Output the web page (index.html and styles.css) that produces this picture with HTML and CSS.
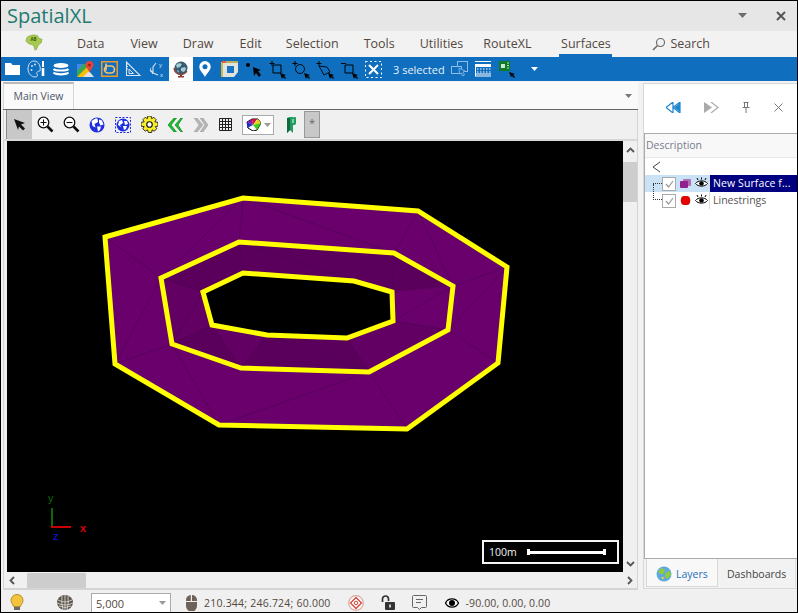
FILE: index.html
```html
<!DOCTYPE html>
<html lang="en">
<head>
<meta charset="utf-8">
<title>SpatialXL</title>
<link rel="stylesheet" href="styles.css">
</head>
<body>
<div class="app">
  <header class="titlebar">
    <div class="app-title">SpatialXL</div>
    <div class="window-controls">
      <svg width="10" height="6" viewBox="0 0 10 6"><path d="M0 0h9L4.500 5z" fill="#6e6e6e"/></svg>
      <svg width="10" height="10" viewBox="0 0 10 10"><path d="M1 1l8 8M9 1l-8 8" stroke="#555" stroke-width="2" fill="none"/></svg>
    </div>
  </header>

  <nav class="menubar">
    <svg class="logo" width="18" height="17" viewBox="0 0 20 17"><path d="M5 1l5-1 4 1 2 3 3 1-1 4-3 2-2 5-2 1-1-4-2-2-4-1-3-3 1-4z" fill="#a6c94f" stroke="#7f9c3a" stroke-width=".6"/><text x="6" y="7" class="logo-text">AB</text></svg>
    <a class="m m-data">Data</a>
    <a class="m m-view">View</a>
    <a class="m m-draw">Draw</a>
    <a class="m m-edit">Edit</a>
    <a class="m m-sel">Selection</a>
    <a class="m m-tools">Tools</a>
    <a class="m m-util">Utilities</a>
    <a class="m m-route">RouteXL</a>
    <a class="m m-surf active">Surfaces</a>
    <svg class="search-ico" width="14" height="14" viewBox="0 0 14 14"><circle cx="8.500" cy="5.500" r="4" fill="none" stroke="#666" stroke-width="1.100"/><path d="M5.500 8.500L1 13" stroke="#666" stroke-width="1.400"/></svg>
    <a class="m m-search">Search</a>
  </nav>

  <div class="quickbar">
    <span class="qb"><svg width="16" height="14" viewBox="0 0 16 14"><path d="M0 1h6l1.500 2H15v10H0z" fill="#fff"/></svg></span>
    <span class="qb"><svg width="20" height="18" viewBox="0 0 20 18"><path d="M7 1C3 1 1 5 1 9c0 5 4 8 7 8 2 0 3-1 2-3-1-2 1-3 3-3 1-4-1-10-6-10z" fill="none" stroke="#cfe1f2" stroke-width="1"/><circle cx="5" cy="6" r="1" fill="#cfe1f2"/><circle cx="8" cy="4.500" r="1" fill="#cfe1f2"/><circle cx="4.500" cy="10" r="1" fill="#cfe1f2"/><path d="M16 1v6" stroke="#fff" stroke-width="2"/><path d="M16 8v8" stroke="#fff" stroke-width="2.600"/></svg></span>
    <span class="qb"><svg width="16" height="14" viewBox="0 0 16 14"><ellipse cx="8" cy="3.500" rx="7.500" ry="2.500" fill="#fff"/><path d="M.5 7c2 2 13 2 15 0M.5 10.500c2 2.500 13 2.500 15 0" stroke="#fff" stroke-width="2.200" fill="none"/></svg></span>
    <span class="qb"><svg width="17" height="16" viewBox="0 0 17 16"><path d="M0 3h12v13H0z" fill="#34a853"/><path d="M0 16L12 4v12z" fill="#fbbc04"/><path d="M0 3h6L0 10z" fill="#4285f4"/><path d="M6 16l6-6 5 6z" fill="#dfe3e6"/><path d="M12.500 0a4 4 0 0 1 4 4c0 2.500-3 4-4 8-1-4-4-5.500-4-8a4 4 0 0 1 4-4z" fill="#e2463a"/><circle cx="12.500" cy="4" r="1.300" fill="#8c1d18"/></svg></span>
    <span class="qb"><svg width="17" height="16" viewBox="0 0 17 16"><rect x=".75" y=".75" width="15.500" height="14.500" fill="none" stroke="#f09a27" stroke-width="1.500"/><rect x="3.500" y="5" width="10" height="7" rx="3.500" fill="none" stroke="#f3c173" stroke-width="1.700"/><path d="M5 2.500v7" stroke="#f3c173" stroke-width="1.700"/></svg></span>
    <span class="qb"><svg width="16" height="16" viewBox="0 0 16 16"><path d="M1.500 1v13.500H15z" fill="none" stroke="#d9e7f5" stroke-width="1.100"/><path d="M4 8v4.500h4.500z" fill="none" stroke="#d9e7f5"/><path d="M3 3h-1M3 5.500h-1M3 8h-1" stroke="#d9e7f5"/></svg></span>
    <span class="qb"><svg width="18" height="17" viewBox="0 0 18 17"><path d="M5 12L5 6l3-4M5 12l5 2M5 12L2 9" stroke="#d9e7f5" stroke-width="1.100" fill="none"/><path d="M5 13a6 6 0 0 1-2-7" stroke="#d9e7f5" fill="none" stroke-dasharray="1.500 1"/><text x="11" y="6" class="axis-mini">y</text><text x="12" y="16" class="axis-mini">x</text></svg></span>
    <span class="qb qb-on"><svg width="16" height="17" viewBox="0 0 16 17"><circle cx="8" cy="7" r="6.500" fill="#3a5a70"/><path d="M3 4l3-2 3 1-2 3-3 1zM8 7l4-1 1 2-2 3-3-1zM4 9l2 1-1 2z" fill="#9fd0d8"/><path d="M1 7a7 7 0 0 0 13 3" stroke="#8a3b32" fill="none" stroke-width="1.300"/><path d="M5 15h6v1.500H5z" fill="#8a3b32"/><path d="M7 13h2v2H7z" fill="#8a3b32"/></svg></span>
    <span class="qb"><svg width="12" height="16" viewBox="0 0 12 16"><path fill-rule="evenodd" d="M6 0a5.700 5.700 0 0 1 5.700 5.700C11.700 9.500 8 12 6 16 4 12 .3 9.500.3 5.700A5.700 5.700 0 0 1 6 0zm0 3.200a2.500 2.500 0 1 0 0 5 2.500 2.500 0 0 0 0-5z" fill="#fff"/></svg></span>
    <span class="qb"><svg width="17" height="17" viewBox="0 0 17 17"><path d="M2 2h15v9l-4 5H2z" fill="#e3e3de"/><rect x="6" y="5" width="7" height="7" fill="#1874c4"/><path d="M1 1h16M1 1v15" stroke="#f0c63c" stroke-width="1.700"/><path d="M1 1h4" stroke="#e8523a" stroke-width="1.700"/></svg></span>
    <span class="qb"><svg width="17" height="15" viewBox="0 0 17 15"><circle cx="3" cy="3" r="2" fill="#000"/><path d="M8 5l8 3-3 1 3 4-2 2-3-4-2 3z" fill="#000"/></svg></span>
    <span class="qb"><svg class="cur" width="18" height="18" viewBox="0 0 18 18"><path d="M4 0v5M1.500 2.500h5M5 4h8v8H5z" fill="none" stroke="#000" stroke-width="1"/><path d="M12 12l6 2-2 1 2 2-1 1-2-2-1 2z" fill="#000"/></svg></span>
    <span class="qb"><svg class="cur" width="18" height="18" viewBox="0 0 18 18"><path d="M3 0v5M.5 2.500h5" stroke="#000" stroke-width="1"/><circle cx="8" cy="8" r="4.500" fill="none" stroke="#000" stroke-width=".9"/><path d="M12 12l6 2-2 1 2 2-1 1-2-2-1 2z" fill="#000"/></svg></span>
    <span class="qb"><svg class="cur" width="18" height="18" viewBox="0 0 18 18"><path d="M3 0v5M.5 2.500h5M3 5l8 1 3 5-6 3z" fill="none" stroke="#000" stroke-width=".9"/><path d="M12 12l6 2-2 1 2 2-1 1-2-2-1 2z" fill="#000"/></svg></span>
    <span class="qb"><svg class="cur" width="18" height="18" viewBox="0 0 18 18"><path d="M1 2.500h5M5 4h8v8H5z" fill="none" stroke="#000" stroke-width="1"/><path d="M12 12l6 2-2 1 2 2-1 1-2-2-1 2z" fill="#000"/></svg></span>
    <span class="qb"><svg width="17" height="17" viewBox="0 0 17 17"><rect x=".5" y=".5" width="16" height="16" fill="none" stroke="#fff" stroke-dasharray="2 2.500"/><path d="M4 4l9 9M13 4l-9 9" stroke="#fff" stroke-width="2"/></svg></span>
    <span class="selected-count">3 selected</span>
    <span class="qb qb-tail"><svg width="17" height="16" viewBox="0 0 17 16"><rect x="6.500" y=".5" width="10" height="10" fill="none" stroke="#8fbce6"/><rect x=".5" y="5.500" width="10" height="7" fill="#106ebe" stroke="#8fbce6"/><path d="M8 7l6 3-2 1 1.500 3-2 1-1-3-2 1z" fill="#106ebe" stroke="#8fbce6" stroke-width=".8"/></svg></span>
    <span class="qb"><svg width="16" height="16" viewBox="0 0 16 16"><path d="M0 .5h16M0 3.500h16M0 15h16M.5 3v12" stroke="#fff"/><rect x="0" y="4" width="16" height="2" fill="#fff"/><path d="M2 8h14M2 11h14" stroke="#fff" stroke-dasharray="1.500 1.500"/><path d="M0 13h16" stroke="#fff"/></svg></span>
    <span class="qb"><svg width="17" height="17" viewBox="0 0 17 17"><rect width="11" height="10" fill="#0f7b27"/><rect x="2" y="3" width="4" height="4" fill="#cfe8d4"/><path d="M8 2h2M8 4.500h2M8 7h2" stroke="#bfe3c7" stroke-width="1.200"/><path d="M10 11l6 2-2 1 2 2-1 1-2-2-1 1z" fill="#000"/></svg></span>
    <svg class="qb-more" width="7" height="4" viewBox="0 0 7 4"><path d="M0 0h7L3.500 4z" fill="#fff"/></svg>
  </div>

  <main class="workspace">
    <section class="docpane">
      <div class="tabstrip">
        <div class="doc-tab">Main View</div>
        <svg class="tab-menu" width="7" height="4" viewBox="0 0 7 4"><path d="M0 0h7L3.500 4z" fill="#777"/></svg>
      </div>
      <div class="maptools">
        <span class="mt mt-on"><svg width="13" height="13" viewBox="0 0 13 13"><path d="M1 1l11 4-4 1.500 4 4-2 2-4-4L5 12z" fill="#111"/></svg></span>
        <span class="mt"><svg width="17" height="17" viewBox="0 0 17 17"><circle cx="6.500" cy="6.500" r="5.300" fill="#fff" stroke="#111" stroke-width="1.300"/><path d="M3.500 6.500h6M6.500 3.500v6" stroke="#111" stroke-width="1.100"/><path d="M10.500 10.500l5 5" stroke="#111" stroke-width="2.600"/></svg></span>
        <span class="mt"><svg width="17" height="17" viewBox="0 0 17 17"><circle cx="6.500" cy="6.500" r="5.300" fill="#fff" stroke="#111" stroke-width="1.300"/><path d="M3.500 6.500h6" stroke="#111" stroke-width="1.100"/><path d="M10.500 10.500l5 5" stroke="#111" stroke-width="2.600"/></svg></span>
        <span class="mt"><svg width="16" height="16" viewBox="0 0 16 16"><circle cx="8" cy="8" r="7.500" fill="#1f2fe0"/><path d="M2.500 4l4-2.500h2L9 5 5.500 7l1 3.500-3-1.500zM10 2.500l3 1 1.500 4-3 1-1.500-3zM8 9.500h4l-1 3.500-2 1.500z" fill="#fff"/></svg></span>
        <span class="mt"><svg width="16" height="16" viewBox="0 0 16 16"><rect x=".5" y=".5" width="15" height="15" fill="none" stroke="#1f2fe0" stroke-dasharray="2 1.500"/><circle cx="8" cy="8" r="6.500" fill="#1f2fe0"/><path d="M4 4l3-1 1 3-3 2 1 2-3-2zM9 4h3l1 3-3 1zM8 9h4l-1 3-2 1z" fill="#fff"/></svg></span>
        <span class="mt"><svg width="17" height="17" viewBox="0 0 16 16"><path d="M6.500 0h3l.5 2.500 2-1.300 2.300 2.300L13 5.500l3 .5v3.500L13.500 10l1.300 2-2.300 2.300-2-1.300-.5 2.500h-3L6 13l-2 1.300L1.700 12 3 10 0 9.500V6l3-.5-1.300-2L4 1.200l2 1.300z" fill="#f7ee2a" stroke="#111" stroke-width=".8"/><circle cx="8" cy="8" r="2.600" fill="#fff" stroke="#111" stroke-width="1.100"/></svg></span>
        <span class="mt"><svg width="16" height="14" viewBox="0 0 16 14"><path d="M7 0L1 7l6 7h2.500L4 7l5.500-7zM14 0L8 7l6 7h1.500L11 7l4.500-7z" fill="#17c42a" stroke="#0a6b14" stroke-width=".6"/></svg></span>
        <span class="mt"><svg width="16" height="14" viewBox="0 0 16 14"><path d="M1 0l5 7-5 7h3l6-7-6-7zM7 0l5 7-5 7h3l5-7-5-7z" fill="#b5b5b5" stroke="#999" stroke-width=".5"/></svg></span>
        <span class="mt mt-grid"><svg width="13" height="13" viewBox="0 0 13 13"><path d="M.5.500h12v12H.5zM3.500 0v13M6.500 0v13M9.500 0v13M0 3.500h13M0 6.500h13M0 9.500h13" fill="none" stroke="#222"/></svg></span>
        <span class="color-combo"><svg width="15" height="13" viewBox="0 0 15 13"><path d="M1 4l5-3 6 0 3 4-4 7-4 1-5-3z" fill="#fff" stroke="#000"/><path d="M7 7L6 1l5 0z" fill="#d8102c"/><path d="M7 7l5-6 3 4z" fill="#f0d010"/><path d="M7 7l8-2-4 7z" fill="#3ccf1c"/><path d="M7 7l-6-3 5-3z" fill="#8a18a8"/><path d="M7 7l-6 3 0-6z" fill="#2030c0"/></svg><svg width="7" height="4" viewBox="0 0 7 4"><path d="M0 0h7L3.500 4z" fill="#999"/></svg></span>
        <span class="mt mt-ribbon"><svg width="11" height="18" viewBox="0 0 11 18"><path d="M2 2c3-2 6 0 9-1v7c-1 1-2 1-3 1v8l-3-3-3 3z" fill="#1f9c5e"/><path d="M2 2h3v12l-3 3z" fill="#0f6a3c"/><path d="M7 3h2v4H7z" fill="#7cd3a4"/></svg></span>
        <span class="mt-star">*</span>
      </div>
      <div class="viewport">
        <div class="map">
          <svg class="surface" width="616" height="431" viewBox="7 141 616 431">
            <polygon class="lit" fill-rule="evenodd" points="105,237 243,198 418,211 507,267 498,363 407,429 219,425 115,364 105,237 161,278 172,344 241,368 369,372 448,330 453,286 394,253 239,242 161,278"/>
            <polygon class="shade" fill-rule="evenodd" points="161,278 239,242 394,253 453,286 448,330 369,372 241,368 172,344 161,278 203,292 212,325 267,335 347,338 393,321 392,292 354,281 243,273 203,292"/>
            <polygon class="lit" points="392,292 453,286 448,330 393,321"/>
            <polygon class="mid" points="203,292 212,325 172,344 161,278"/>
            <polygon class="mid" points="212,325 267,335 241,368"/>
            <polygon class="mid" points="347,338 393,321 448,330 369,372"/>
            <path class="mesh" d="M243 198L239 242M243 198L161 278M243 198L394 253M418 211L394 253M418 211L453 286M507 267L453 286M507 267L448 330M498 363L448 330M407 429L369 372M219 425L369 372M219 425L172 344M115 364L172 344M115 364L161 278M105 237L161 278M239 242L243 273M239 242L354 281M394 253L354 281M394 253L392 292M453 286L393 321M448 330L393 321M369 372L347 338M369 372L267 335M241 368L267 335M241 368L212 325M172 344L212 325M172 344L203 292M161 278L203 292"/>
            <polygon class="outline" points="105,237 243,198 418,211 507,267 498,363 407,429 219,425 115,364"/>
            <polygon class="outline" points="161,278 239,242 394,253 453,286 448,330 369,372 241,368 172,344"/>
            <polygon class="outline" points="203,292 243,273 354,281 392,292 393,321 347,338 267,335 212,325"/>
          </svg>
          <div class="axes">
            <span class="ax-y">y</span><span class="ax-x">x</span><span class="ax-z">z</span>
            <i class="ax-line-y"></i><i class="ax-line-x"></i>
          </div>
          <div class="scale"><span>100m</span><i class="scale-bar"></i></div>
        </div>
        <div class="vscroll">
          <svg width="9" height="6" viewBox="0 0 9 6"><path d="M1 5l3.500-3.500L8 5" fill="none" stroke="#555" stroke-width="1.800"/></svg>
          <i class="vthumb"></i>
          <svg class="vdown" width="9" height="6" viewBox="0 0 9 6"><path d="M1 1l3.500 3.500L8 1" fill="none" stroke="#555" stroke-width="1.800"/></svg>
        </div>
        <div class="hscroll">
          <svg width="6" height="9" viewBox="0 0 6 9"><path d="M5 1L1.500 4.500 5 8" fill="none" stroke="#555" stroke-width="1.800"/></svg>
          <i class="hthumb"></i>
        </div>
        <div class="corner"><svg width="6" height="9" viewBox="0 0 6 9"><path d="M1 1l3.500 3.500L1 8" fill="none" stroke="#555" stroke-width="1.800"/></svg></div>
      </div>
    </section>

    <aside class="sidepanel">
      <div class="panel-nav">
        <svg class="pn-back" width="15" height="11" viewBox="0 0 15 11"><path d="M7 0L0 5.500 7 11zM14 0L7 5.500l7 5.500z" fill="none" stroke="#1f86d0" stroke-width="1.200"/><path d="M14 1L8 5.500l6 4.500z" fill="#1f86d0"/></svg>
        <svg class="pn-fwd" width="15" height="11" viewBox="0 0 15 11"><path d="M0 0l8 5.500L0 11z" fill="#aaa"/><path d="M7 0l7 5.500L7 11" fill="none" stroke="#aaa" stroke-width="1.200"/></svg>
        <svg class="pn-pin" width="8" height="11" viewBox="0 0 8 11"><path d="M1.500.500h5M2.500.500v4.500M5.500.500v4.500M.5 5.500h7M4 5.500V11" fill="none" stroke="#777"/></svg>
        <svg class="pn-close" width="9" height="9" viewBox="0 0 9 9"><path d="M.5.500l8 8M8.500.500l-8 8" stroke="#777"/></svg>
      </div>
      <div class="layer-box">
        <div class="layer-head">Description</div>
        <div class="layer-back"><svg width="9" height="12" viewBox="0 0 9 12"><path d="M8 1L1 6l7 5" fill="none" stroke="#444"/></svg></div>
        <div class="layer-row row-sel">
          <i class="tree tree-first"></i>
          <span class="check"><svg width="9" height="8" viewBox="0 0 9 8"><path d="M1 4l2.500 3L8 1" fill="none" stroke="#999" stroke-width="1.200"/></svg></span>
          <svg class="swatch" width="11" height="9" viewBox="0 0 11 9"><rect x="3" y="0" width="8" height="7" rx="1" fill="#b070b0"/><rect x="0" y="2" width="8" height="7" rx="1" fill="#90208f"/></svg>
          <svg class="eye" width="13" height="11" viewBox="0 0 13 11"><path d="M.5 6.500C3 3 10 3 12.500 6.500 10 10 3 10 .5 6.500z" fill="#fff" stroke="#000"/><circle cx="6.500" cy="6.500" r="2.300" fill="#000"/><path d="M3 3L2 1M6.500 2.500V.5M10 3l1-2" stroke="#000"/></svg>
          <span class="layer-name name-sel">New Surface f...</span>
        </div>
        <div class="layer-row">
          <i class="tree tree-last"></i>
          <span class="check"><svg width="9" height="8" viewBox="0 0 9 8"><path d="M1 4l2.500 3L8 1" fill="none" stroke="#999" stroke-width="1.200"/></svg></span>
          <svg class="swatch" width="11" height="9" viewBox="0 0 11 9"><rect x="1" y="0" width="9" height="9" rx="4" fill="#e60000" stroke="#a00" stroke-width=".5"/></svg>
          <svg class="eye" width="13" height="11" viewBox="0 0 13 11"><path d="M.5 6.500C3 3 10 3 12.500 6.500 10 10 3 10 .5 6.500z" fill="#fff" stroke="#000"/><circle cx="6.500" cy="6.500" r="2.300" fill="#000"/><path d="M3 3L2 1M6.500 2.500V.5M10 3l1-2" stroke="#000"/></svg>
          <span class="layer-name">Linestrings</span>
        </div>
      </div>
      <div class="panel-tabs">
        <div class="ptab ptab-on"><svg width="16" height="16" viewBox="0 0 16 16"><circle cx="8" cy="8" r="7.500" fill="#5fa8e0"/><path d="M2 5l4-3 3 2-2 4-3 0zM9 7l5-2 1 4-4 4-2-2z" fill="#8fcb3c"/><path d="M5 11l3 0-1 3z" fill="#f0d040"/></svg><span>Layers</span></div>
        <div class="ptab">Dashboards</div>
      </div>
    </aside>
  </main>

  <footer class="statusbar">
    <svg class="st-bulb" width="14" height="17" viewBox="0 0 14 17"><path d="M7 .5a6 6 0 0 1 6 6c0 2.500-2 3.500-2.500 6h-7C3 10 1 9 1 6.500a6 6 0 0 1 6-6z" fill="#f2c53d" stroke="#b78c2a"/><path d="M4 13h6v3H4z" fill="#6a6a6a"/></svg>
    <svg class="st-pine" width="16" height="15" viewBox="0 0 16 15"><ellipse cx="8" cy="7.500" rx="8" ry="7.500" fill="#5b5550"/><path d="M1 5q7 4 14 0M0 8q8 4 16 0M2 11q6 3 12 0M5 1q-1 7 1 14M11 1q1 7-1 14M8 0v15" stroke="#d8d4cc" fill="none" stroke-width=".9"/></svg>
    <div class="scale-combo"><span>5,000</span><svg width="7" height="4" viewBox="0 0 7 4"><path d="M0 0h7L3.500 4z" fill="#999"/></svg></div>
    <svg class="st-mouse" width="11" height="16" viewBox="0 0 11 16"><path d="M0 6V5a5 5 0 0 1 4.800-5v6zM6 0a5 5 0 0 1 5 5v1H6zM0 7h11v4a5 5 0 0 1-11 0z" fill="#6c6257"/></svg>
    <span class="st-text st-coords">210.344; 246.724; 60.000</span>
    <svg class="st-target" width="16" height="16" viewBox="0 0 16 16"><circle cx="8" cy="8" r="7.300" fill="#fff" stroke="#d8a8a0" stroke-width="1.200"/><path d="M8 2.500L13.500 8 8 13.500 2.500 8z" fill="none" stroke="#d9443a" stroke-width="1.300"/><circle cx="8" cy="8" r="1.800" fill="none" stroke="#d9443a"/></svg>
    <svg class="st-lock" width="14" height="15" viewBox="0 0 14 15"><path d="M1.500 7V4a3 3 0 0 1 6 0v2" fill="none" stroke="#333" stroke-width="1.700"/><rect x="4" y="7" width="10" height="8" rx="1" fill="#333"/><rect x="8.300" y="9.500" width="1.500" height="3" fill="#fff"/></svg>
    <svg class="st-note" width="15" height="15" viewBox="0 0 15 15"><path d="M1.500.500h12a1 1 0 0 1 1 1v10a1 1 0 0 1-1 1h-4L7.500 14.500 5.500 12.500h-4a1 1 0 0 1-1-1v-10a1 1 0 0 1 1-1z" fill="none" stroke="#666"/><path d="M4 4.500h7M4 7.500h5" stroke="#666"/></svg>
    <svg class="st-eye" width="14" height="10" viewBox="0 0 14 10"><path d="M.5 5C3-.5 11-.5 13.500 5 11 10.500 3 10.500.5 5z" fill="#fff" stroke="#000" stroke-width="1.400"/><circle cx="7" cy="5" r="3" fill="#000"/></svg>
    <span class="st-text st-angle">-90.00, 0.00, 0.00</span>
  </footer>
</div>
</body>
</html>
```

FILE: styles.css
```css
* { box-sizing: border-box; }
html, body { margin: 0; padding: 0; }
body { font-family: "Open Sans", "Noto Sans", sans-serif; color: #444; background: #f2f2f2; }
i { display: block; }
svg { display: block; flex: none; }

.app { width: 798px; height: 613px; display: flex; flex-direction: column; border: 1px solid #000; background: #f2f2f2; overflow: hidden; }

.titlebar { height: 30px; background: #e6e6e6; display: flex; align-items: center; justify-content: space-between; padding: 0 11px 0 6px; flex: none; }
.app-title { font-size: 20px; color: #1f7a70; line-height: 30px; }
.window-controls { display: flex; align-items: center; gap: 28px; }

.menubar { height: 26px; background: #f2f2f2; display: flex; align-items: center; flex: none; padding-left: 24px; font-size: 12.500px; color: #54483f; }
.logo { margin-right: 34px; margin-top: -4px; }
.logo-text { font: bold 5px "Open Sans", sans-serif; fill: #3a5a10; }
.axis-mini { font: 6px "Liberation Sans", sans-serif; fill: #d9e7f5; }
.m { display: block; line-height: 26px; height: 26px; color: #54483f; white-space: nowrap; }
.m-view { margin-left: 26px; }
.m-draw { margin-left: 25px; }
.m-edit { margin-left: 26px; }
.m-sel { margin-left: 24px; }
.m-tools { margin-left: 25px; }
.m-util { margin-left: 25px; }
.m-route { margin-left: 20px; }
.m-surf { margin-left: 28px; }
.m.active { border-bottom: 3px solid #106ebe; width: 53px; text-align: center; }
.search-ico { margin-left: 40px; margin-right: 4px; }

.quickbar { height: 24px; background: #106ebe; display: flex; align-items: center; flex: none; color: #fff; }
.qb { width: 24px; height: 24px; display: flex; align-items: center; justify-content: center; flex: none; }
.qb-on { background: #fff; }
.qb .cur { margin-top: 1px; }
.selected-count { font-size: 11px; color: #e6f0fa; margin-left: 8px; width: 49px; white-space: nowrap; }
.qb-tail { margin-left: 5px; }
.qb-more { margin-left: 12px; }

.workspace { flex: 1; min-height: 0; display: flex; padding: 1px 0 0 2px; }

.docpane { width: 635px; flex: none; display: flex; flex-direction: column; }
.tabstrip { height: 28px; display: flex; align-items: flex-end; justify-content: space-between; background: #fafafa; padding-right: 6px; flex: none; border-bottom: 1px solid #666; }
.doc-tab { width: 71px; height: 27px; border: 1px solid #d6d6d6; border-top: 2px solid #b8b8b8; border-bottom: 0; background: #fafafa; font-size: 10.500px; color: #4a5568; text-align: center; line-height: 25px; }
.tab-menu { align-self: center; }

.maptools { height: 31px; flex: none; display: flex; align-items: center; background: #f0f0f0; padding: 0 0 0 2px; border-left: 1px solid #d4d4d4; border-right: 1px solid #d4d4d4; border-bottom: 2px solid #d8d8d8; }
.mt { width: 26px; height: 29px; display: flex; align-items: center; justify-content: center; flex: none; }
.mt-on { background: #c8c8c8; border-left: 1px solid #8a8a8a; }
.mt-grid { width: 22px; }
.color-combo { width: 32px; height: 20px; margin-left: 6px; background: #fff; border: 1px solid #aaa; display: flex; align-items: center; gap: 3px; padding-left: 3px; flex: none; }
.mt-ribbon { width: 16px; margin: 0 6px 0 8px; }
.mt-star { width: 16px; height: 27px; background: #c8c8c8; border: 1px solid #999; font-size: 11px; color: #666; text-align: center; line-height: 22px; flex: none; }

.viewport { flex: 1; min-height: 0; display: grid; grid-template-columns: 616px 14px; grid-template-rows: 431px 16px; padding-left: 3px; border-left: 1px solid #d4d4d4; border-right: 1px solid #d4d4d4; border-bottom: 2px solid #d4d4d4; background: #f0f0f0; align-content: start; }
.map { position: relative; background: #000; overflow: hidden; }
.surface { position: absolute; inset: 0; }
.lit { fill: #6a006b; }
.shade { fill: #5a005c; }
.mid { fill: #620063; }
.mesh { fill: none; stroke: #4c0050; stroke-width: .6; }
.outline { fill: none; stroke: #ffff00; stroke-width: 5; stroke-linejoin: miter; }

.axes { position: absolute; left: 35px; top: 348px; width: 50px; height: 50px; font: 11px "Liberation Sans", sans-serif; }
.ax-y { position: absolute; left: 6px; top: 3px; color: #0a6a0a; line-height: 12px; }
.ax-x { position: absolute; left: 38px; top: 33px; color: #d00; line-height: 12px; font-weight: bold; }
.ax-z { position: absolute; left: 11px; top: 41px; color: #1414e0; line-height: 12px; }
.ax-line-y { position: absolute; left: 9px; top: 19px; width: 2px; height: 20px; background: #0a6a0a; }
.ax-line-x { position: absolute; left: 9px; top: 37px; width: 20px; height: 2px; background: #c00; }

.scale { position: absolute; left: 475px; top: 399px; width: 137px; height: 24px; border: 2px solid #f4f4f4; display: flex; align-items: center; padding-left: 5px; color: #f4f4f4; font: 10.500px "Open Sans", sans-serif; }
.scale-bar { width: 79px; height: 6px; margin-left: 10px; border-left: 3px solid #fff; border-right: 3px solid #fff; position: relative; }
.scale-bar::after { content: ""; position: absolute; left: 0; right: 0; top: 1.500px; height: 3px; background: #fff; }

.vscroll { position: relative; display: flex; flex-direction: column; align-items: center; padding-top: 6px; background: #f0f0f0; }
.vthumb { position: absolute; left: 0; top: 21px; width: 14px; height: 40px; background: #cdcdcd; }
.vdown { margin-top: auto; margin-bottom: 5px; }
.hscroll { position: relative; background: #f0f0f0; display: flex; align-items: center; padding-left: 2px; }
.hthumb { position: absolute; left: 20px; top: 1px; width: 59px; height: 15px; background: #cdcdcd; }
.corner { display: flex; align-items: center; justify-content: center; background: #f0f0f0; }

.sidepanel { width: 155px; flex: none; margin-left: 5px; margin-top: 1px; margin-bottom: 1px; display: flex; flex-direction: column; background: #fafafa; border: 1px solid #d8d8d8; border-right: 0; }
.panel-nav { height: 49px; flex: none; position: relative; background: #fff; }
.pn-back { position: absolute; left: 22px; top: 18px; }
.pn-fwd { position: absolute; left: 60px; top: 18px; }
.pn-pin { position: absolute; left: 98px; top: 18px; }
.pn-close { position: absolute; left: 130px; top: 19px; }

.layer-box { flex: 1; min-height: 0; background: #fff; border-top: 1px solid #aaa; border-bottom: 1px solid #aaa; border-left: 1px solid #aaa; }
.layer-head { height: 23px; line-height: 22px; background: #f8f8f8; font-size: 10.500px; color: #7a7a8c; padding-left: 1px; }
.layer-back { height: 18px; padding-left: 7px; display: flex; align-items: center; background: #fff; border-top: 1px solid #e8e8e8; }
.layer-row { height: 17px; display: flex; align-items: center; position: relative; padding-left: 17px; font-size: 10.500px; color: #555; }
.row-sel { background: #c9e2f5; }
.tree { position: absolute; left: 8px; width: 9px; border-left: 1px dotted #333; border-bottom: 1px dotted #333; }
.tree-first { top: 8px; height: 1px; border-left: 0; }
.tree-last { top: -8px; height: 16px; }
.check { width: 14px; height: 14px; border: 1px solid #aaa; background: #fff; display: flex; align-items: center; justify-content: center; flex: none; }
.swatch { margin-left: 4px; }
.eye { margin-left: 4px; margin-top: -2px; }
.layer-name { margin-left: 1px; padding-left: 3px; height: 17px; line-height: 16px; flex: 1; white-space: nowrap; border-left: 1px solid #ddd; }
.name-sel { background: #000080; color: #fff; font-size: 10.500px; letter-spacing: .1px; }

.panel-tabs { height: 29px; flex: none; display: flex; align-items: flex-start; padding-left: 2px; background: #f2f2f2; }
.ptab { height: 28px; padding: 2px 9px 0; display: flex; align-items: center; font-size: 10.500px; color: #444; border-right: 1px solid #ddd; }
.ptab-on { width: 72px; gap: 4px; padding: 2px 0 0 9px; background: #f8f8f8; border: 1px solid #d8d8d8; border-top: 0; color: #1f6fc0; }

.statusbar { height: 22px; flex: none; display: flex; align-items: center; background: #f0f0f0; padding: 3px 0 0 9px; }
.st-pine { margin-left: 33px; }
.scale-combo { width: 80px; height: 19px; margin-left: 18px; border: 1px solid #aaa; border-bottom: 0; background: #fff; display: flex; align-items: center; justify-content: space-between; padding: 0 4px; font-size: 11px; color: #54483f; }
.st-mouse { margin-left: 15px; }
.st-text { font-size: 10.500px; color: #54483f; white-space: nowrap; }
.st-coords { margin-left: 7px; letter-spacing: .22px; }
.st-target { margin-left: 17px; }
.st-lock { margin-left: 17px; }
.st-note { margin-left: 17px; }
.st-eye { margin-left: 18px; }
.st-angle { margin-left: 7px; letter-spacing: .12px; }
```
